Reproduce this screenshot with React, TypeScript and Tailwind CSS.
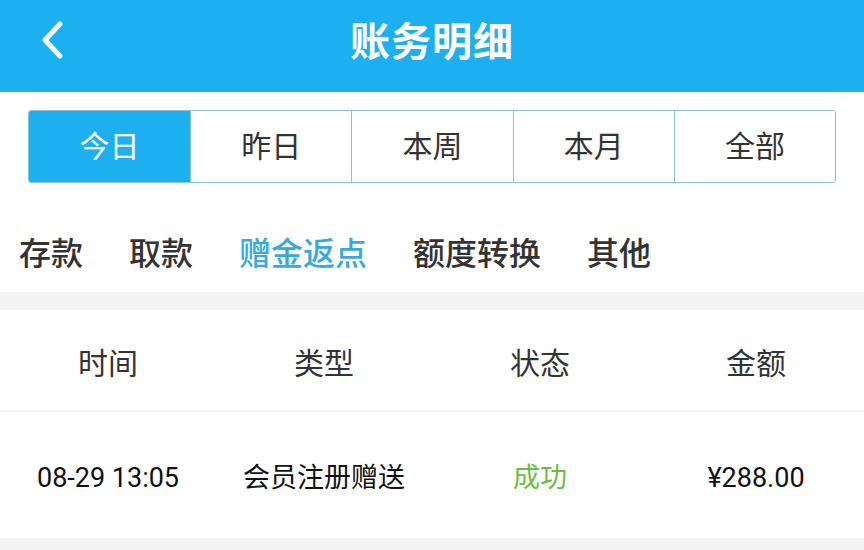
import { useState } from 'react'

const RANGES = ['今日', '昨日', '本周', '本月', '全部']
const TABS = ['存款', '取款', '赠金返点', '额度转换', '其他']
const COLS = ['时间', '类型', '状态', '金额']

const ROWS = [
  { time: '08-29 13:05', type: '会员注册赠送', status: '成功', amount: '¥288.00' },
]

const CJK = "font-['Roboto','Noto_Sans_CJK_SC',sans-serif]"

export default function App() {
  const [range, setRange] = useState(0)
  const [tab, setTab] = useState(2)

  return (
    <div className={`w-[864px] h-[550px] overflow-hidden bg-white ${CJK}`}>

      {/* Header */}
      <header className="h-[92px] bg-[#1db0f0] flex items-center relative">
        <button className="absolute left-[37px] top-[20px] w-[30px] h-[40px] flex items-center justify-center">
          <svg width="24" height="40" viewBox="0 0 24 40" fill="none">
            <path d="M20 4 L5 20 L20 36" stroke="white" strokeWidth="5" strokeLinecap="round" strokeLinejoin="round" />
          </svg>
        </button>
        <h1 className="flex-1 text-center text-white text-[40px] font-bold leading-none pb-[6px] tracking-[1px]">账务明细</h1>
      </header>

      {/* Range segmented control */}
      <div className="px-[28px] pt-[18px]">
        <div className="h-[73px] grid grid-cols-5 border border-[#8cc3d3] rounded-[3px] overflow-hidden">
          {RANGES.map((r, i) => (
            <button
              key={r}
              onClick={() => setRange(i)}
              className={`text-[30px] leading-none flex items-center justify-center ${
                i > 0 ? 'border-l border-[#8cc3d3]' : ''
              } ${i === range ? 'bg-[#1db0f0] text-white' : 'bg-white text-[#333]'}`}
            >
              {r}
            </button>
          ))}
        </div>
      </div>

      {/* Type tabs */}
      <nav className="h-[109px] flex items-center gap-[46px] px-[19px] pt-[33px]">
        {TABS.map((t, i) => (
          <button
            key={t}
            onClick={() => setTab(i)}
            className={`text-[32px] font-medium leading-none ${i === tab ? 'text-[#38a9dc]' : 'text-[#333]'}`}
          >
            {t}
          </button>
        ))}
      </nav>

      <div className="h-[18px] bg-[#f4f4f4]" />

      {/* Table */}
      <div className="grid grid-cols-4 h-[102px] items-center border-b-2 border-[#f2f2f2]">
        {COLS.map((c) => (
          <div key={c} className="text-center text-[30px] text-[#333] leading-none pt-[8px]">{c}</div>
        ))}
      </div>

      {ROWS.map((r) => (
        <div key={r.time} className="grid grid-cols-4 h-[126px] items-center text-[27px] text-[#111] leading-none pt-[6px]">
          <div className="text-center">{r.time}</div>
          <div className="text-center">{r.type}</div>
          <div className="text-center text-[#6cbd3c]">{r.status}</div>
          <div className="text-center">{r.amount}</div>
        </div>
      ))}

      <div className="h-[20px] bg-[#f4f4f4]" />
    </div>
  )
}
